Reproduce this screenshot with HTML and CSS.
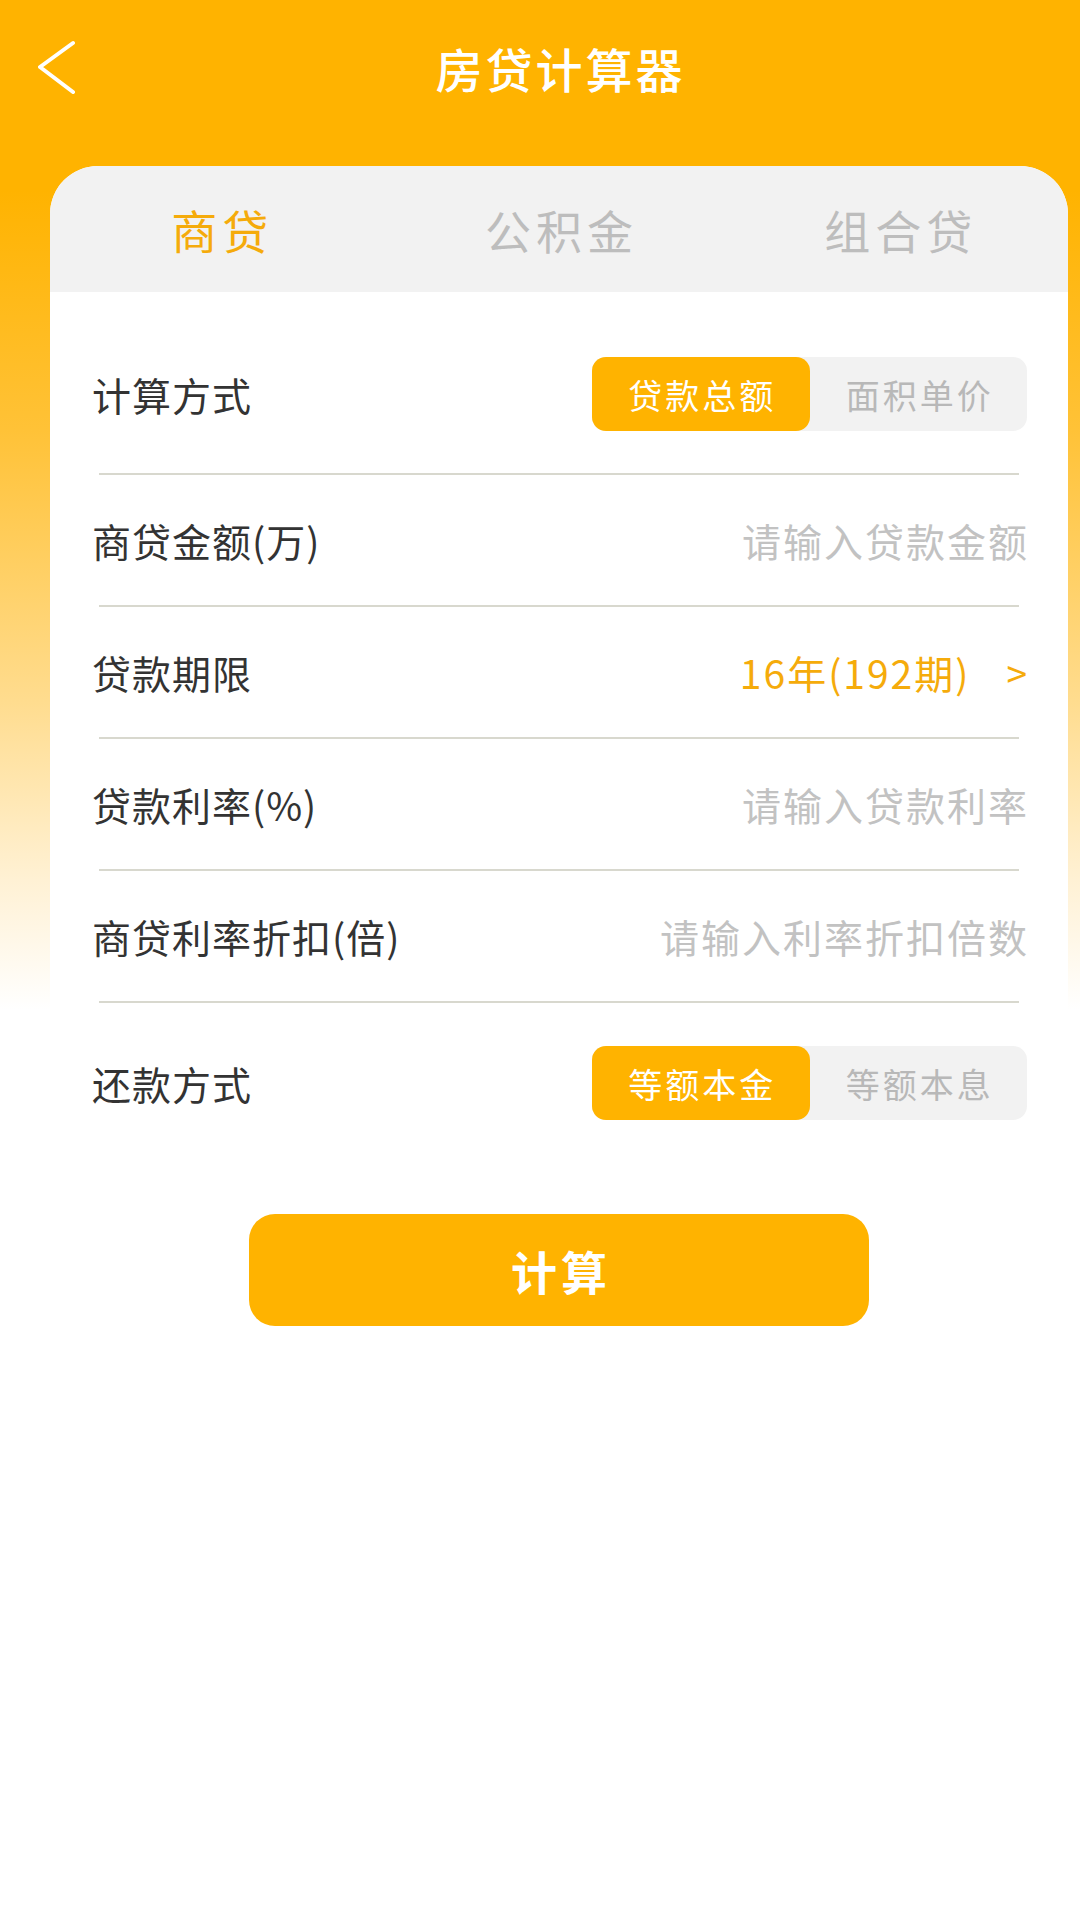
FILE: index.html
```html
<!DOCTYPE html>
<html lang="zh-CN">
<head>
    <meta charset="UTF-8">
    <meta name="viewport" content="width=device-width, initial-scale=1.0">
    <title>房贷计算器</title>
    <link rel="stylesheet" href="styles.css">
</head>
<body>
    <div class="page">
        <div class="header">
            <svg class="back" width="38" height="54" viewBox="0 0 38 54">
                <polyline points="35,3 2,27 35,52" fill="none" stroke="#fff" stroke-width="4" stroke-linecap="round" stroke-linejoin="round"/>
            </svg>
            <h1 class="title">房贷计算器</h1>
            <div class="spacer"></div>
        </div>

        <div class="card">
            <!-- 贷款类型 -->
            <div class="tabs">
                <div class="tab active">商贷</div>
                <div class="tab">公积金</div>
                <div class="tab">组合贷</div>
            </div>

            <div class="form">
                <div class="row row-top">
                    <span class="label">计算方式</span>
                    <div class="segment">
                        <div class="seg-item on">贷款总额</div>
                        <div class="seg-item">面积单价</div>
                    </div>
                </div>
                <div class="line"></div>

                <div class="row">
                    <span class="label">商贷金额(万)</span>
                    <input class="field" type="text" placeholder="请输入贷款金额">
                </div>
                <div class="line"></div>

                <div class="row">
                    <span class="label">贷款期限</span>
                    <div class="pick">
                        <span class="pick-value">16年(192期)</span>
                        <span class="arrow">&gt;</span>
                    </div>
                </div>
                <div class="line"></div>

                <div class="row">
                    <span class="label">贷款利率(%)</span>
                    <input class="field" type="text" placeholder="请输入贷款利率">
                </div>
                <div class="line"></div>

                <div class="row">
                    <span class="label">商贷利率折扣(倍)</span>
                    <input class="field" type="text" placeholder="请输入利率折扣倍数">
                </div>
                <div class="line"></div>

                <div class="row row-bottom">
                    <span class="label">还款方式</span>
                    <div class="segment">
                        <div class="seg-item on">等额本金</div>
                        <div class="seg-item">等额本息</div>
                    </div>
                </div>
            </div>
        </div>

        <button class="calc">计算</button>
    </div>
</body>
</html>
```

FILE: styles.css
```css
body {
    margin: 0;
    width: 1080px;
    height: 1920px;
    font-family: "Noto Sans CJK SC", "Noto Sans", sans-serif;
    background: linear-gradient(180deg, #ffb300 0, #ffb300 190px, #ffc237 430px, #ffdc8e 700px, #fff1d4 880px, #ffffff 1010px);
}
.page {
    padding-left: 38px;
}
.header {
    display: flex;
    align-items: center;
    height: 134px;
}
.back {
    display: block;
    flex-shrink: 0;
}
.title {
    flex: 1;
    margin: 0;
    text-align: center;
    color: #fff;
    font-size: 47px;
    font-weight: 500;
    letter-spacing: 3px;
    text-indent: 3px;
}
.spacer {
    width: 38px;
}
.card {
    margin: 32px 12px 0 12px;
    background-color: #fff;
    border-radius: 48px 48px 0 0;
    overflow: hidden;
}
.tabs {
    display: grid;
    grid-template-columns: 1fr 1fr 1fr;
    align-items: center;
    height: 126px;
    background-color: #f2f2f2;
}
.tab {
    text-align: center;
    font-size: 46px;
    letter-spacing: 5px;
    text-indent: 5px;
    color: #bdbdbd;
}
.tab.active {
    color: #f5ab0b;
}
.form {
    padding: 37px 41px 0 42px;
}
.row {
    display: flex;
    align-items: center;
    justify-content: space-between;
    height: 130px;
}
.row-top {
    margin-bottom: 14px;
}
.row-bottom {
    margin-top: 15px;
}
.label {
    font-size: 39px;
    letter-spacing: 1px;
    color: #333;
}
.line {
    height: 2px;
    margin: 0 8px 0 7px;
    background-color: #d8d8ce;
}
.segment {
    display: flex;
    width: 435px;
    height: 74px;
    background-color: #f2f2f2;
    border-radius: 14px;
}
.seg-item {
    flex: 1;
    display: flex;
    align-items: center;
    justify-content: center;
    font-size: 34px;
    letter-spacing: 3px;
    text-indent: 3px;
    color: #b8b8b8;
    border-radius: 14px;
}
.seg-item.on {
    background-color: #ffb300;
    color: #fff;
}
.field {
    width: 520px;
    margin-right: -2px;
    padding: 0;
    border: none;
    outline: none;
    background: transparent;
    text-align: right;
    font-family: inherit;
    font-size: 39px;
    letter-spacing: 2px;
    color: #333;
}
.field::placeholder {
    color: #c2c2c2;
}
.pick {
    display: flex;
    align-items: center;
    color: #f5ab0b;
}
.pick-value {
    font-size: 39px;
    letter-spacing: 2px;
}
.arrow {
    margin-left: 36px;
    font-size: 37px;
}
.calc {
    display: block;
    width: 620px;
    height: 112px;
    margin: 66px auto 0;
    border: none;
    border-radius: 26px;
    background-color: #ffb300;
    color: #fff;
    font-family: inherit;
    font-size: 46px;
    font-weight: 700;
    letter-spacing: 4px;
    text-indent: 4px;
    cursor: pointer;
}
```
